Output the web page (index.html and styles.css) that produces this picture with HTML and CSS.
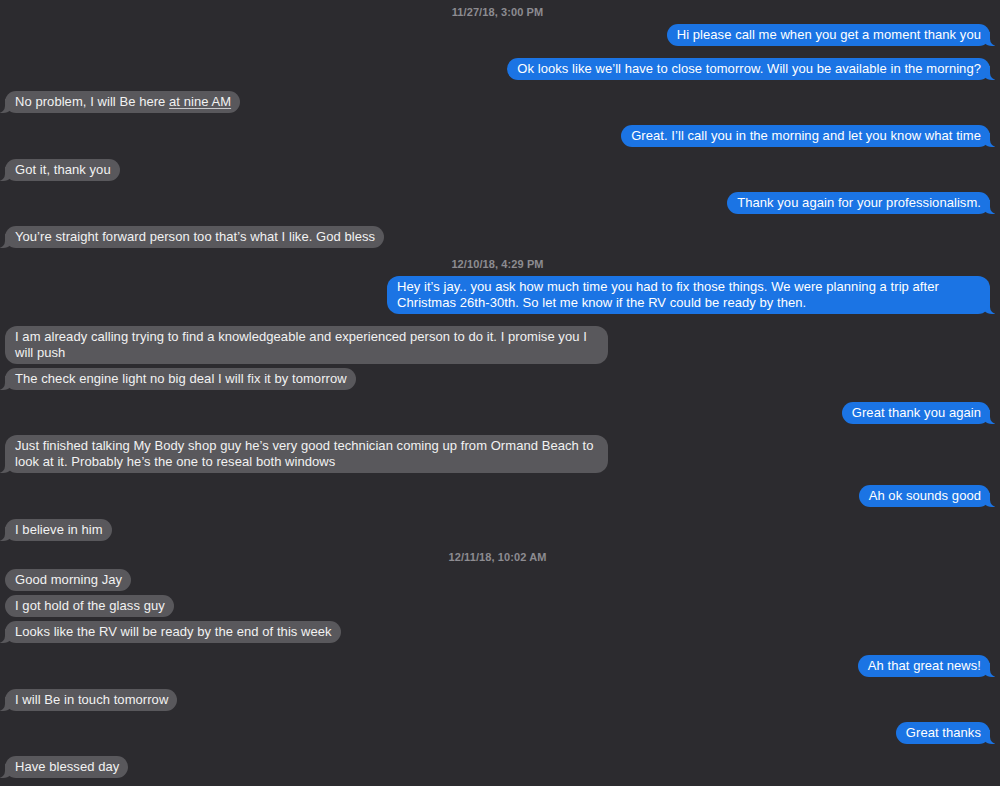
FILE: index.html
```html
<!DOCTYPE html>
<html>
<head>
<meta charset="utf-8">
<link rel="stylesheet" href="styles.css">
</head>
<body>
<div class="chat">
  <div class="ts first">11/27/18, 3:00 PM</div>
  <div class="row out"><div class="bubble tail">Hi please call me when you get a moment thank you</div></div>
  <div class="row out"><div class="bubble tail">Ok looks like we’ll have to close tomorrow. Will you be available in the morning?</div></div>
  <div class="row in"><div class="bubble tail">No problem, I will Be here <span class="link">at nine AM</span></div></div>
  <div class="row out"><div class="bubble tail">Great. I’ll call you in the morning and let you know what time</div></div>
  <div class="row in"><div class="bubble tail">Got it, thank you</div></div>
  <div class="row out"><div class="bubble tail">Thank you again for your professionalism.</div></div>
  <div class="row in"><div class="bubble tail">You’re straight forward person too that’s what I like. God bless</div></div>
  <div class="ts">12/10/18, 4:29 PM</div>
  <div class="row out"><div class="bubble tail">Hey it’s jay.. you ask how much time you had to fix those things. We were planning a trip after Christmas 26th-30th. So let me know if the RV could be ready by then.</div></div>
  <div class="row in"><div class="bubble">I am already calling trying to find a knowledgeable and experienced person to do it. I promise you I will push</div></div>
  <div class="row in cont"><div class="bubble tail">The check engine light no big deal I will fix it by tomorrow</div></div>
  <div class="row out"><div class="bubble tail">Great thank you again</div></div>
  <div class="row in"><div class="bubble tail">Just finished talking My Body shop guy he’s very good technician coming up from Ormand Beach to look at it. Probably he’s the one to reseal both windows</div></div>
  <div class="row out"><div class="bubble tail">Ah ok sounds good</div></div>
  <div class="row in"><div class="bubble tail">I believe in him</div></div>
  <div class="ts">12/11/18, 10:02 AM</div>
  <div class="row in"><div class="bubble">Good morning Jay</div></div>
  <div class="row in cont"><div class="bubble">I got hold of the glass guy</div></div>
  <div class="row in cont"><div class="bubble tail">Looks like the RV will be ready by the end of this week</div></div>
  <div class="row out"><div class="bubble tail">Ah that great news!</div></div>
  <div class="row in"><div class="bubble tail">I will Be in touch tomorrow</div></div>
  <div class="row out"><div class="bubble tail">Great thanks</div></div>
  <div class="row in"><div class="bubble tail">Have blessed day</div></div>
</div>
</body>
</html>
```

FILE: styles.css
```css
html {
  margin: 0;
  padding: 0;
  background: #2c2b2f;
}

body {
  margin: 0;
  padding: 0;
  font-family: "Liberation Sans", Arial, sans-serif;
  font-size: 13px;
  letter-spacing: 0.06px;
  color: #fff;
  overflow: hidden;
}

.chat {
  display: flex;
  flex-direction: column;
  padding: 4px 10px 0 5px;
}

.ts {
  text-align: center;
  font-size: 11px;
  font-weight: bold;
  letter-spacing: 0.1px;
  line-height: 16px;
  color: #8d8c91;
  margin: 8.5px 0 4px;
}

.ts.first {
  margin-top: 0;
}

.row {
  display: flex;
  margin-top: 11.67px;
}

.ts + .row {
  margin-top: 0;
}

.row.cont {
  margin-top: 4px;
}

.row.out {
  justify-content: flex-end;
}

.row.in {
  justify-content: flex-start;
}

.bubble {
  position: relative;
  max-width: 584px;
  padding: 3px 9px 3px 10px;
  line-height: 16px;
  border-radius: 12px;
}

.out .bubble {
  background: #1b74e4;
  color: #fff;
}

.in .bubble {
  background: #59585c;
  color: #f2f2f2;
}

.bubble.tail::before,
.bubble.tail::after {
  content: "";
  position: absolute;
  bottom: 0;
  z-index: -1;
}

.out .bubble.tail::before {
  right: -5px;
  width: 14px;
  height: 14px;
  background: #1b74e4;
  border-bottom-left-radius: 11px;
}

.out .bubble.tail::after {
  right: -9px;
  width: 9px;
  height: 16px;
  background: #2c2b2f;
  border-bottom-left-radius: 7px;
}

.in .bubble.tail::before {
  left: -5px;
  width: 14px;
  height: 14px;
  background: #59585c;
  border-bottom-right-radius: 11px;
}

.in .bubble.tail::after {
  left: -9px;
  width: 9px;
  height: 16px;
  background: #2c2b2f;
  border-bottom-right-radius: 7px;
}

.link {
  text-decoration: underline;
  text-decoration-color: #c9c9cb;
  text-underline-offset: 2px;
}
```
